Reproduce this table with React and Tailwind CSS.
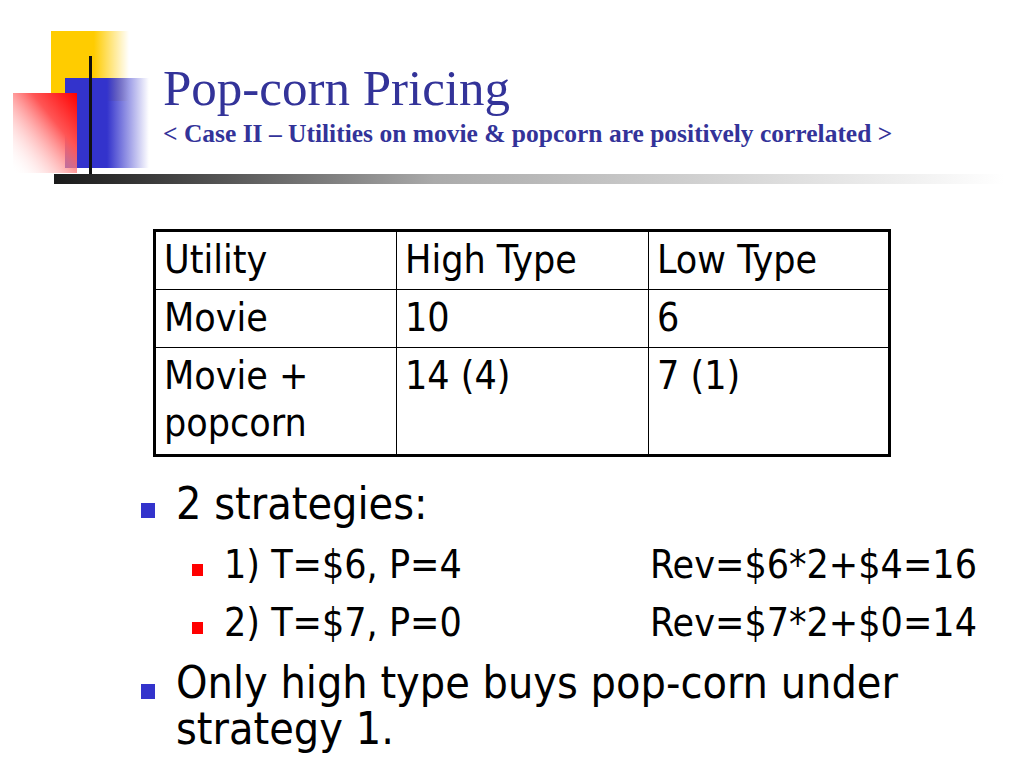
import React from 'react';

// 슬라이드 왼쪽 위 장식 (노랑/파랑/빨강 사각형 + 세로선)
function Logo() {
  return (
    <svg width="163" height="174" viewBox="0 0 163 174" className="shrink-0">
      <defs>
        <linearGradient id="yel" x1="0" y1="0" x2="1" y2="0">
          <stop offset="0" stopColor="#ffcc00" />
          <stop offset="0.55" stopColor="#ffcc00" />
          <stop offset="1" stopColor="#ffcc00" stopOpacity="0" />
        </linearGradient>
        <linearGradient id="blu" x1="0" y1="0" x2="1" y2="0">
          <stop offset="0" stopColor="#3333cc" />
          <stop offset="0.5" stopColor="#3333cc" />
          <stop offset="1" stopColor="#3333cc" stopOpacity="0" />
        </linearGradient>
        <linearGradient id="red" x1="1" y1="0" x2="0" y2="1">
          <stop offset="0" stopColor="#ff0000" />
          <stop offset="0.35" stopColor="#ff5555" />
          <stop offset="1" stopColor="#ffffff" stopOpacity="0" />
        </linearGradient>
      </defs>
      <rect x="51" y="31" width="78" height="70" fill="url(#yel)" />
      <rect x="65" y="78" width="84" height="90" fill="url(#blu)" />
      <rect x="13" y="93" width="64" height="80" fill="url(#red)" />
      <rect x="89" y="56" width="3" height="118" fill="#111111" />
    </svg>
  );
}

const rows = [
  ['Utility', 'High Type', 'Low Type'],
  ['Movie', '10', '6'],
  ['Movie +\npopcorn', '14 (4)', '7 (1)'],
];

export default function App() {
  return (
    <div className="w-[1024px] h-[768px] bg-white overflow-hidden text-black" style={{ fontFamily: '"DejaVu Sans Condensed", "DejaVu Sans", sans-serif' }}>
      {/* 헤더 */}
      <div className="flex h-[174px]">
        <Logo />
        <div className="flex flex-col pt-[63px] text-[#333399] font-['Liberation_Serif',serif]">
          <div className="text-[51px] leading-[50px] whitespace-nowrap">Pop-corn Pricing</div>
          <div className="mt-[8px] text-[25.5px] leading-[25px] font-bold whitespace-nowrap">
            &lt; Case II – Utilities on movie &amp; popcorn are positively correlated &gt;
          </div>
        </div>
      </div>
      <div className="ml-[54px] w-[950px] h-[10px] bg-gradient-to-r from-[#1a1a1a] via-[#aaaaaa] via-40% to-white" />

      {/* 표 */}
      <table className="mt-[45px] ml-[153px] border-collapse border-[3px] border-black text-[39px] leading-[47px]">
        <tbody>
          {rows.map((r, i) => (
            <tr key={i} className={i === 0 ? 'h-[59px]' : i === 1 ? 'h-[58px]' : 'h-[108px]'}>
              {r.map((c, j) => (
                <td
                  key={j}
                  className={`border border-black align-top pl-[8px] pt-[4px] whitespace-pre-line ${j === 0 ? 'w-[242px]' : j === 1 ? 'w-[252px]' : 'w-[241px]'}`}
                >
                  {c}
                </td>
              ))}
            </tr>
          ))}
        </tbody>
      </table>

      {/* 글머리 목록 */}
      <div className="ml-[141px] mt-[24px]">
        <div className="flex items-start">
          <div className="w-[14px] h-[15px] bg-[#3333cc] mt-[22px] shrink-0" />
          <div className="ml-[21px] text-[44.5px] leading-[46px]">2 strategies:</div>
        </div>
        <div className="ml-[51px] mt-[9px] text-[39px] leading-[58px]">
          <div className="flex items-start">
            <div className="w-[11px] h-[12px] bg-[#ff0000] mt-[28px] shrink-0" />
            <div className="ml-[21px] w-[426px]">1) T=$6, P=4</div>
            <div>Rev=$6*2+$4=16</div>
          </div>
          <div className="flex items-start">
            <div className="w-[11px] h-[12px] bg-[#ff0000] mt-[28px] shrink-0" />
            <div className="ml-[21px] w-[426px]">2) T=$7, P=0</div>
            <div>Rev=$7*2+$0=14</div>
          </div>
        </div>
        <div className="flex items-start mt-[8px]">
          <div className="w-[14px] h-[15px] bg-[#3333cc] mt-[24px] shrink-0" />
          <div className="ml-[21px] text-[44.5px] leading-[46px] w-[820px]">
            Only high type buys pop-corn under<br />strategy 1.
          </div>
        </div>
      </div>
    </div>
  );
}
